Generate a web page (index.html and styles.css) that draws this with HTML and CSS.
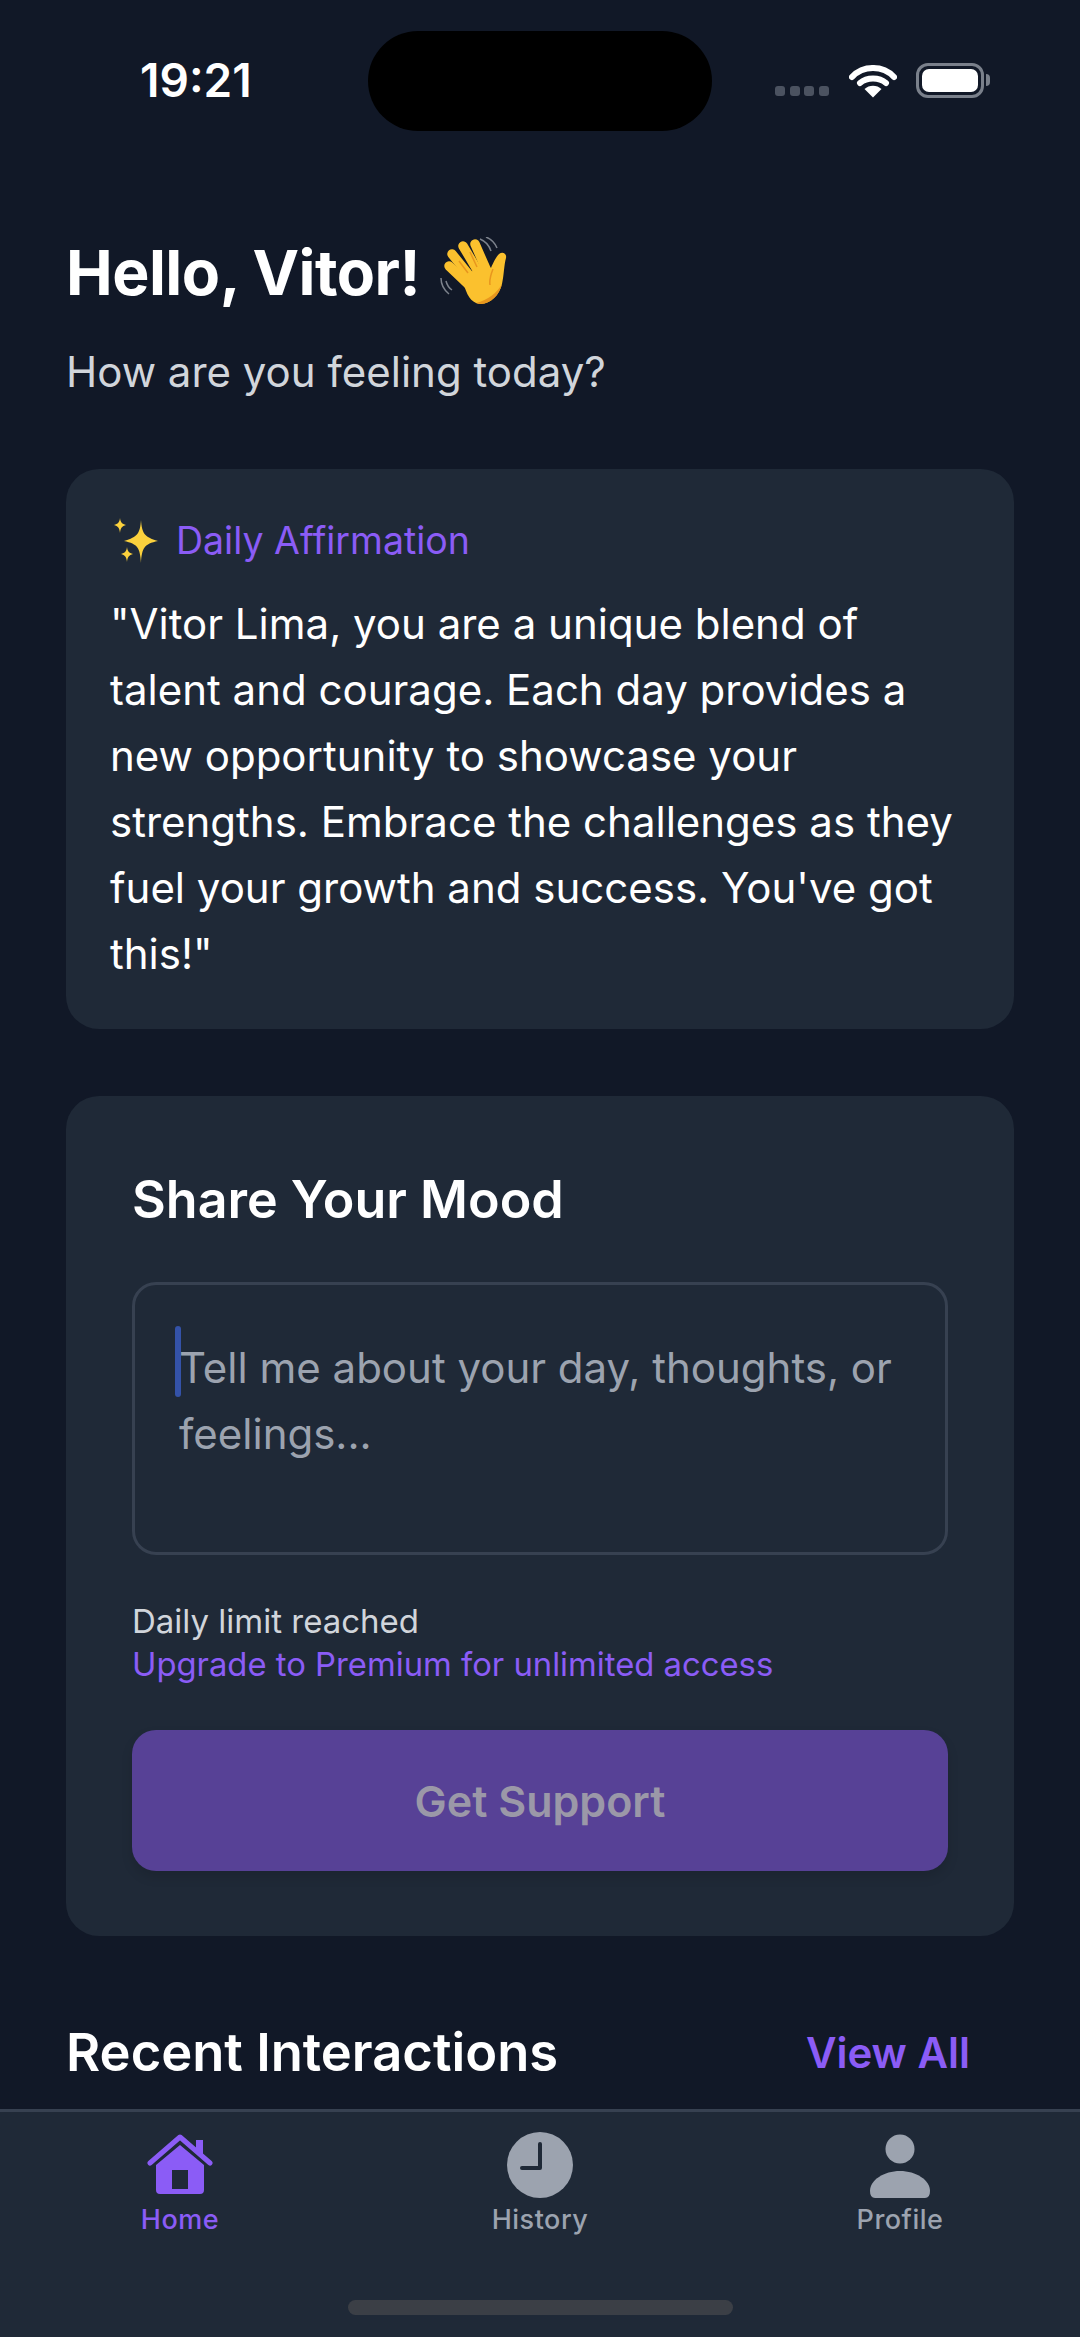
FILE: index.html
```html
<!DOCTYPE html>
<html>
<head>
	<title>Home</title>
	<link rel="stylesheet" href="styles.css">
</head>
<body>
	<div id="app">
		<div id="status">
			<span class="time">19:21</span>
			<div class="island"></div>
			<div class="status-icons">
				<div class="dots"><i></i><i></i><i></i><i></i></div>
				<svg class="wifi" viewBox="0 0 48 36">
					<path d="M24 6C15.5 6 8 9.500 3 15" fill="none" stroke="#fff" stroke-width="6" stroke-linecap="round"/>
					<path d="M24 6C32.500 6 40 9.500 45 15" fill="none" stroke="#fff" stroke-width="6" stroke-linecap="round"/>
					<path d="M11 21C18 15 30 15 37 21" fill="none" stroke="#fff" stroke-width="6" stroke-linecap="round"/>
					<path d="M15.500 27C20 22.500 28 22.500 32.500 27L24 35.500Z" fill="#fff"/>
				</svg>
				<div class="battery"><div class="battery-fill"></div></div>
				<div class="battery-cap"></div>
			</div>
		</div>

		<div id="main">
			<h1 class="greeting">
				Hello, Vitor!
				<svg class="wave" viewBox="0 0 70 70">
					<path d="M42 2C47 4 51 8 53 14M48 0C53 2 57 6 59 11" fill="none" stroke="#7c828c" stroke-width="1.500"/>
					<path d="M3 41C3 47 6 53 11 57M8 44C9 48 11 51 14 53" fill="none" stroke="#7c828c" stroke-width="1.500"/>
					<g stroke="#fbc12e" stroke-width="9.500" stroke-linecap="round">
						<path d="M11 29L32 49"/>
						<path d="M14 17L35 43"/>
						<path d="M25 9L41 36"/>
						<path d="M37 7L48 32"/>
					</g>
					<path d="M24 40L47 27L53 31C55 26 58 20 61 17C65 14 69 17 68 21C66 28 66 38 64 47C61 60 49 70 38 66C31 63 27 54 24 40Z" fill="#fbc12e"/>
					<path d="M55 32C53 37 51 42 52 48M21 24L30 36M32 15L39 30" fill="none" stroke="#e8961e" stroke-width="1.500"/>
					<path d="M38 66C49 70 61 60 64 47C59 56 50 63 38 66Z" fill="#e8961e"/>
				</svg>
			</h1>
			<p class="sub">How are you feeling today?</p>

			<div class="card affirmation">
				<div class="aff-label">
					<svg class="sparkles" viewBox="0 0 46 46">
						<path d="M28 2C29 15 31 19 45 23C31 26 29 30 28 45C27 30 25 26 11 23C25 19 27 15 28 2Z" fill="#fbd13d"/>
						<path d="M7 0C7.500 4 9 6 13 7C9 8 7.500 10 7 15C6.500 10 5 8 1 7C5 6 6.500 4 7 0Z" fill="#fbd13d"/>
						<path d="M14 29C14.500 33 16 35 20 36C16 37 14.500 39 14 44C13.500 39 12 37 8 36C12 35 13.500 33 14 29Z" fill="#fbd13d"/>
					</svg>
					Daily Affirmation
				</div>
				<p class="aff-text">"Vitor Lima, you are a unique blend of talent and courage. Each day provides a new opportunity to showcase your strengths. Embrace the challenges as they fuel your growth and success. You've got this!"</p>
			</div>

			<div class="card mood">
				<h2 class="mood-title">Share Your Mood</h2>
				<div class="input">
					<span class="caret"></span>
					Tell me about your day, thoughts, or feelings...
				</div>
				<p class="limit">Daily limit reached</p>
				<p class="upgrade">Upgrade to Premium for unlimited access</p>
				<div class="button">Get Support</div>
			</div>

			<div class="recent">
				<h2 class="recent-title">Recent Interactions</h2>
				<span class="view-all">View All</span>
			</div>
		</div>

		<div id="tabs">
			<div class="tab active">
				<svg class="tab-icon" viewBox="0 0 66 66">
					<path d="M3 31L33 5L63 31" fill="none" stroke="#8b5cf6" stroke-width="5" stroke-linecap="round" stroke-linejoin="round"/>
					<path d="M49 8H56V24L49 18Z" fill="#8b5cf6"/>
					<path d="M33 13L57 33V58Q57 62 53 62H13Q9 62 9 58V33ZM25 38V57H41V38Z" fill="#8b5cf6" fill-rule="evenodd"/>
				</svg>
				<span>Home</span>
			</div>
			<div class="tab">
				<svg class="tab-icon" viewBox="0 0 66 66">
					<circle cx="33" cy="33" r="33" fill="#9ca3af"/>
					<path d="M33 12V36H15" fill="none" stroke="#1f2937" stroke-width="4" stroke-linecap="round" stroke-linejoin="round"/>
				</svg>
				<span>History</span>
			</div>
			<div class="tab">
				<svg class="tab-icon" viewBox="0 0 66 66">
					<circle cx="33" cy="17" r="14.500" fill="#9ca3af"/>
					<path d="M3 59C3 48 17 39 33 39C49 39 63 48 63 59Q63 66 58 66H8Q3 66 3 59Z" fill="#9ca3af"/>
				</svg>
				<span>Profile</span>
			</div>
			<div class="home-bar"></div>
		</div>
	</div>
</body>
</html>
```

FILE: styles.css
```css
html, body {
	margin: 0;
	padding: 0;
	background: #111827;
}

#app {
	width: 1080px;
	height: 2337px;
	display: flex;
	flex-direction: column;
	overflow: hidden;
	font-family: 'Inter', 'Liberation Sans', sans-serif;
	color: #fff;
}

h1, h2, p {
	margin: 0;
}

/* status bar */
#status {
	display: flex;
	align-items: flex-start;
	padding-top: 31px;
	height: 100px;
}
#status .time {
	width: 368px;
	box-sizing: border-box;
	padding-left: 140px;
	padding-top: 24px;
	font-size: 46px;
	line-height: 50px;
	font-weight: 600;
}
#status .island {
	width: 344px;
	height: 100px;
	background: #000;
	border-radius: 50px;
}
.status-icons {
	display: flex;
	align-items: center;
	margin-top: 31px;
	margin-left: 63px;
	height: 36px;
}
.dots {
	display: flex;
	gap: 4.600px;
	margin-top: 22px;
	margin-right: 20px;
}
.dots i {
	display: block;
	width: 10px;
	height: 10px;
	border-radius: 3px;
	background: #4b5260;
}
.wifi {
	width: 48px;
	height: 36px;
	margin-right: 19px;
}
.battery {
	width: 68px;
	height: 35px;
	box-sizing: border-box;
	border: 3px solid #7a808b;
	border-radius: 12px;
	padding: 3px;
}
.battery-fill {
	height: 100%;
	background: #fff;
	border-radius: 7px;
}
.battery-cap {
	width: 4px;
	height: 12px;
	margin-left: 2px;
	background: #7a808b;
	border-radius: 0 4px 4px 0;
}

/* content */
#main {
	flex: 1;
	padding: 106px 66px 0;
	min-height: 0;
}

.greeting {
	display: flex;
	align-items: center;
	gap: 18px;
	font-size: 62.500px;
	line-height: 60px;
	font-weight: 700;
	letter-spacing: -0.5px;
}
.wave {
	width: 70px;
	height: 70px;
}
.sub {
	margin-top: 35px;
	font-size: 42px;
	line-height: 60px;
	color: #d1d5db;
}

.card {
	background: #1f2937;
	border-radius: 33px;
	margin-top: 67px;
}

.affirmation {
	padding: 49px 44px 42px;
}
.aff-label {
	display: flex;
	align-items: center;
	gap: 17px;
	font-size: 37.500px;
	line-height: 44px;
	color: #8b5cf6;
}
.sparkles {
	width: 46px;
	height: 46px;
	margin-left: 3px;
}
.aff-text {
	margin-top: 27px;
	font-size: 42px;
	line-height: 66px;
}

.mood {
	padding: 72px 66px 65px;
}
.mood-title {
	font-size: 52px;
	line-height: 64px;
	font-weight: 600;
}
.input {
	position: relative;
	margin-top: 50px;
	height: 273px;
	box-sizing: border-box;
	padding: 50px 44px 0;
	border: 3px solid #374151;
	border-radius: 24px;
	font-size: 42px;
	line-height: 66px;
	color: #9ca3af;
}
.caret {
	position: absolute;
	left: 40px;
	top: 41px;
	width: 6px;
	height: 71px;
	border-radius: 3px;
	background: #3452a8;
}
.limit {
	margin-top: 44px;
	font-size: 33px;
	line-height: 44px;
	color: #d1d5db;
}
.upgrade {
	font-size: 32.800px;
	line-height: 43px;
	color: #8b5cf6;
}
.button {
	margin-top: 44px;
	height: 141px;
	display: flex;
	align-items: center;
	justify-content: center;
	background: #574196;
	border-radius: 24px;
	font-size: 43px;
	font-weight: 600;
	color: #9b98a8;
	box-shadow: 0 6px 12px rgba(0, 0, 0, 0.12);
}

.recent {
	display: flex;
	justify-content: space-between;
	align-items: center;
	margin-top: 86px;
	padding-right: 44px;
	height: 60px;
}
.recent-title {
	font-size: 52.500px;
	line-height: 60px;
	font-weight: 600;
}
.view-all {
	font-size: 42px;
	font-weight: 600;
	color: #8b5cf6;
}

/* bottom tabs */
#tabs {
	position: relative;
	height: 228px;
	box-sizing: border-box;
	padding-top: 20px;
	display: grid;
	grid-template-columns: repeat(3, 1fr);
	align-items: start;
	background: #1f2937;
	border-top: 3px solid #374151;
}
.tab {
	display: flex;
	flex-direction: column;
	align-items: center;
	font-size: 27px;
	line-height: 40px;
	font-weight: 500;
	color: #9ca3af;
	letter-spacing: 0.500px;
}
.tab.active {
	color: #8b5cf6;
}
.tab-icon {
	width: 66px;
	height: 66px;
	margin-bottom: 2px;
}
.home-bar {
	position: absolute;
	left: 348px;
	bottom: 22px;
	width: 385px;
	height: 15px;
	border-radius: 8px;
	background: #3b3f46;
}
```
